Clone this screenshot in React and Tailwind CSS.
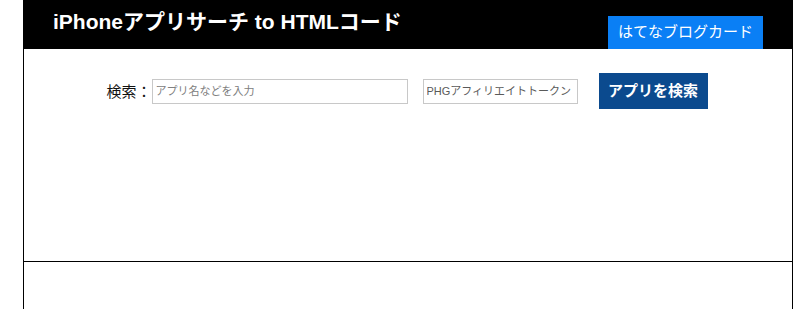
import React from 'react';

const font = { fontFamily: '"Liberation Sans", "Noto Sans CJK JP", sans-serif' };

// ヘッダー
const Header = () => (
  <div className="flex h-[49px] items-stretch justify-between bg-black pl-[29px] pr-[29px]">
    <h1 className="pt-[8px] text-[21px] font-bold leading-[28px] text-white">
      iPhoneアプリサーチ to HTMLコード
    </h1>
    <a className="mt-[16px] flex h-[33px] w-[155px] items-center justify-center bg-[#0a7ff5] text-[15px] text-white">
      はてなブログカード
    </a>
  </div>
);

// 検索フォーム
const SearchForm = () => (
  <form className="flex items-center justify-center pt-[24px] pr-[2px]" onSubmit={(e) => e.preventDefault()}>
    <label htmlFor="q" className="text-[15px] leading-none text-[#111]">検索：</label>
    <input
      id="q"
      type="text"
      placeholder="アプリ名などを入力"
      className="h-[25px] w-[256px] border border-[#c8c8c8] px-[3px] text-[11px] placeholder:text-[#808080]"
    />
    <input
      type="text"
      placeholder="PHGアフィリエイトトークン"
      className="ml-[15px] h-[25px] w-[155px] border border-[#c8c8c8] px-[3px] text-[11px] placeholder:text-[#5a5a5a]"
    />
    <button
      type="submit"
      className="ml-[21px] h-[36px] w-[109px] bg-[#0b4a8e] text-[15px] font-bold text-white"
    >
      アプリを検索
    </button>
  </form>
);

export default function App() {
  return (
    <div className="h-[309px] overflow-hidden bg-white" style={font}>
      <div className="ml-[23px] w-[770px] border-x border-black">
        <Header />
        <div className="h-[213px] border-b border-black">
          <SearchForm />
        </div>
        <div className="h-[200px]" />
      </div>
    </div>
  );
}
